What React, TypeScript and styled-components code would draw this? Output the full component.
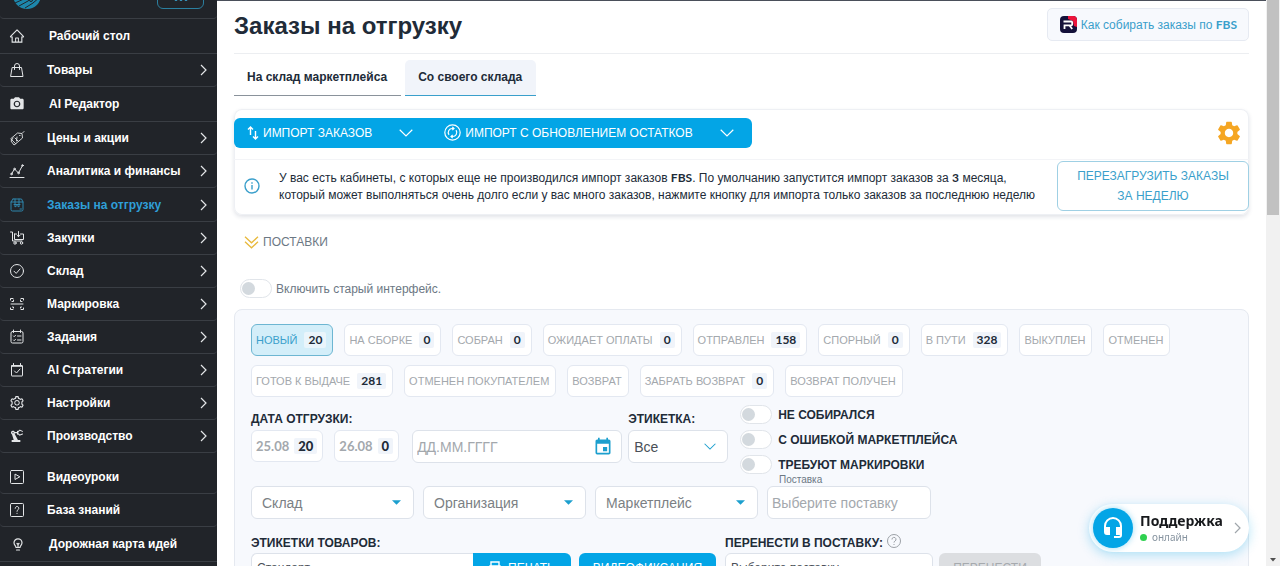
import React from "react";
import styled, { createGlobalStyle, css } from "styled-components";
import { AiOutlineHome, AiOutlineSetting } from "react-icons/ai";
import { MdPrecisionManufacturing, MdSettings, MdEvent, MdLocalSee } from "react-icons/md";

const colors = {
  side: "#212429",
  sideLine: "#3a3e44",
  blue: "#03a5e6",
  link: "#3a9fcb",
  dark: "#212b38",
  grey: "#6c7884",
  mute: "#a3a8ad",
  line: "#dde2ea",
  panel: "#f7f9fd",
};

const GlobalStyle = createGlobalStyle`
  *, *::before, *::after { box-sizing: border-box; }
  body { margin: 0; background: #fff; color: ${colors.dark}; }
  body, button, input, select { font-family: "Liberation Sans", Arial, sans-serif; }
  button, input, select { margin: 0; }
  b { font-family: Lato, sans-serif; }
  svg { display: block; flex: none; }
`;

const Shell = styled.div`
  display: flex;
  height: 100vh;
  overflow: hidden;
`;

/* ---------- sidebar ---------- */

const Sidebar = styled.nav`
  flex: none;
  width: 217px;
  background: ${colors.side};
`;

const Brand = styled.div`
  display: flex;
  justify-content: space-between;
  align-items: flex-end;
  height: 19px;
  padding: 0 13px 9px;
  border-bottom: 1px solid ${colors.sideLine};
  border-radius: 0 0 4px 4px;
`;

const MoreButton = styled.button`
  display: flex;
  justify-content: center;
  align-items: flex-end;
  width: 47px;
  height: 28px;
  padding: 0 0 7px;
  border: 1px solid #2b7f9f;
  border-radius: 6px;
  background: transparent;
`;

const NavList = styled.ul`
  margin: 0;
  padding: 0;
  list-style: none;
`;

const NavItem = styled.li<{ $sub?: boolean; $spaced?: boolean; $active?: boolean }>`
  height: ${(p) => (p.$sub ? (p.$active ? 34 : 33) : 35)}px;
  margin-top: ${(p) => (p.$spaced ? 8 : 0)}px;
  border-bottom: 1px solid ${colors.sideLine};
  border-radius: ${(p) => (p.$sub ? "0 0 4px 4px" : "0")};
`;

const NavLink = styled.a<{ $sub?: boolean; $active?: boolean }>`
  display: flex;
  align-items: center;
  height: 100%;
  padding: 0 8px 0 9px;
  color: ${(p) => (p.$active ? "#2f9fd8" : "#fff")};
  font-size: 12px;
  font-weight: 700;
  text-decoration: none;
  white-space: nowrap;

  span {
    flex: 1;
    padding-left: ${(p) => (p.$sub ? 22 : 24)}px;
  }
  & > svg:first-child {
    color: ${(p) => (p.$active ? "#2f86ad" : "#e4e6e8")};
  }
`;

/* ---------- main column ---------- */

const Main = styled.main`
  flex: 1;
  min-width: 0;
  padding: 7px 17px 0;
  border-top: 1px solid #4a4f5a;
`;

const Header = styled.header`
  display: flex;
  justify-content: space-between;
  align-items: flex-start;
  height: 46px;
  border-bottom: 1px solid #eceef1;
`;

const Title = styled.h1`
  margin: 0;
  font-size: 24px;
  line-height: 36px;
  font-weight: 700;
`;

const HelpLink = styled.a`
  display: flex;
  align-items: center;
  gap: 4px;
  height: 33px;
  padding: 0 11px 0 12px;
  border: 1px solid #e6eaf2;
  border-radius: 5px;
  background: #f7f9fd;
  color: ${colors.link};
  font-size: 12px;
  text-decoration: none;
`;

const Tabs = styled.div`
  display: flex;
  gap: 4px;
  margin-top: 6px;
`;

const Tab = styled.button<{ $active?: boolean }>`
  height: 36px;
  padding: 0 14px 2px 13px;
  border: 0;
  border-bottom: 1px solid ${(p) => (p.$active ? colors.link : "#8a929b")};
  border-radius: ${(p) => (p.$active ? "5px 5px 0 0" : "0")};
  background: ${(p) => (p.$active ? "#f1f4fa" : "transparent")};
  color: ${colors.dark};
  font-size: 12px;
  font-weight: 700;
`;

const ImportCard = styled.section`
  margin-top: 13px;
  border-radius: 8px;
  box-shadow: inset 0 0 0 1px #eef0f4, 0 2px 4px rgba(40, 60, 90, 0.14);
`;

const ImportBar = styled.div`
  display: flex;
  justify-content: space-between;
  align-items: center;
  height: 51px;
  padding: 1px 6px 4px 0;
  border-bottom: 1px solid #f3f4f7;
`;

const SplitButton = styled.div`
  display: flex;
  height: 30px;
  border-radius: 6px;
  background: ${colors.blue};
`;

const BlueAction = styled.button`
  display: flex;
  align-items: center;
  gap: 4px;
  padding: 0 13px;
  border: 0;
  background: transparent;
  color: #fff;
  font-size: 12px;
  white-space: nowrap;
`;

const IconButton = styled.button`
  display: flex;
  align-items: center;
  padding: 0 18px 0 14px;
  border: 0;
  background: transparent;
  color: #fff;
`;

const GearButton = styled(IconButton)`
  padding: 0;
  color: #f5a623;
`;

const Notice = styled.div`
  display: flex;
  align-items: center;
  padding: 1px 0 4px 10px;

  p {
    flex: 1;
    margin: 0;
    padding: 0 16px 0 19px;
    font-size: 12px;
    line-height: 17px;
  }
`;

const OutlineButton = styled.button`
  flex: none;
  width: 192px;
  height: 50px;
  padding: 0 16px;
  border: 1px solid #9fd0e4;
  border-radius: 6px;
  background: #fff;
  color: ${colors.link};
  font-size: 12px;
  line-height: 20px;
`;

const Disclosure = styled.button`
  display: flex;
  align-items: center;
  gap: 4px;
  margin-top: 17px;
  padding: 0 10px;
  height: 20px;
  border: 0;
  background: transparent;
  color: ${colors.grey};
  font-size: 12px;
`;

const SwitchRow = styled.label<{ $bold?: boolean }>`
  display: flex;
  align-items: center;
  gap: ${(p) => (p.$bold ? 6 : 4)}px;
  height: 19px;
  color: ${(p) => (p.$bold ? colors.dark : colors.grey)};
  font-size: 12px;
  font-weight: ${(p) => (p.$bold ? 700 : 400)};
  white-space: nowrap;
`;

const LegacyToggle = styled.div`
  padding: 27px 6px 11px;
`;

const Switch = styled.input`
  appearance: none;
  display: flex;
  align-items: center;
  width: 32px;
  height: 19px;
  padding: 0 1px;
  border: 1px solid #e1e5ea;
  border-radius: 10px;
  background: #fff;

  &::before {
    content: "";
    width: 13px;
    height: 13px;
    border-radius: 50%;
    background: #d3d9de;
  }
`;

const Panel = styled.section`
  padding: 14px 16px;
  border: 1px solid #e5e9f0;
  border-radius: 8px;
  background: ${colors.panel};
`;

const Chips = styled.div`
  display: flex;
  flex-wrap: wrap;
  gap: 9px 11px;
`;

const Chip = styled.button<{ $active?: boolean; $large?: boolean }>`
  display: flex;
  align-items: center;
  gap: ${(p) => (p.$large ? 5 : 7)}px;
  height: 32px;
  padding: 0 ${(p) => (p.$large ? 5 : 6)}px 0 4px;
  border: 1px solid ${(p) => (p.$active ? "#6db6d2" : "#e3e8f1")};
  border-radius: 6px;
  background: ${(p) => (p.$active ? "#d3eef9" : "#fff")};
  color: ${(p) => (p.$active ? colors.link : colors.mute)};
  font-family: ${(p) => (p.$large ? "Lato, sans-serif" : '"Liberation Sans", Arial, sans-serif')};
  font-size: ${(p) => (p.$large ? 13 : 11)}px;
  font-weight: ${(p) => (p.$large ? 700 : 400)};
  white-space: nowrap;

  b {
    padding: 0 4px;
    border-radius: 2px;
    background: ${(p) => (p.$active ? "#eaf5fb" : "#f0f4fa")};
    color: ${colors.dark};
    font-size: ${(p) => (p.$large ? 13 : 12)}px;
    line-height: 16px;
  }
`;

const Row = styled.div<{ $gap?: number; $top?: number }>`
  display: flex;
  align-items: flex-start;
  gap: ${(p) => p.$gap ?? 9}px;
  margin-top: ${(p) => p.$top ?? 0}px;
`;

const Field = styled.div<{ $top?: number }>`
  display: flex;
  flex-direction: column;
  padding-top: ${(p) => p.$top ?? 0}px;
`;

const Label = styled.label`
  display: flex;
  gap: 4px;
  height: 19px;
  font-size: 12px;
  line-height: 19px;
  font-weight: 700;
  white-space: nowrap;
`;

const SwitchStack = styled.div`
  display: flex;
  flex-direction: column;
  gap: 6px;
`;

const control = css`
  width: 100%;
  height: 33px;
  border: 1px solid ${colors.line};
  border-radius: 6px;
  background: #fff;
  font-size: 14px;
  appearance: none;
  outline: 0;
`;

const TextInput = styled.input`
  ${control}
  padding: 0 4px;
  color: ${colors.dark};
  &::placeholder {
    color: ${colors.mute};
    opacity: 1;
  }
`;

const ControlBox = styled.div<{ $w: number; $inset?: number }>`
  position: relative;
  width: ${(p) => p.$w}px;

  svg {
    position: absolute;
    top: 0;
    bottom: 0;
    right: ${(p) => p.$inset ?? 12}px;
    margin: auto 0;
    color: #1c9fce;
    pointer-events: none;
  }
`;

const Select = styled.select<{ $tone?: "soft" | "small"; $joined?: boolean }>`
  ${control}
  padding: 0 ${(p) => (p.$tone === "soft" ? 10 : 5)}px;
  color: ${(p) => (p.$tone === "soft" ? "#7b7f84" : "#4a4f57")};
  ${(p) => p.$tone === "small" && "height: 29px; font-size: 12px;"}
  ${(p) => p.$joined && "border-radius: 6px 0 0 6px; border-right: 0;"}
`;

const TinyLabel = styled.label`
  height: 12px;
  padding-left: 12px;
  color: ${colors.grey};
  font-size: 10px;
  line-height: 12px;
`;

const SolidButton = styled.button<{ $w: number; $kind?: "joined" | "muted" }>`
  display: flex;
  justify-content: center;
  align-items: center;
  gap: 7px;
  width: ${(p) => p.$w}px;
  height: 29px;
  padding: 0;
  border: 0;
  border-radius: ${(p) => (p.$kind === "joined" ? "0 6px 6px 0" : "6px")};
  background: ${(p) => (p.$kind === "muted" ? "#dcdee1" : colors.blue)};
  color: ${(p) => (p.$kind === "muted" ? "#a6aaae" : "#fff")};
  font-size: 12px;
`;

const Support = styled.button`
  position: fixed;
  right: 31px;
  bottom: 14px;
  display: flex;
  align-items: center;
  gap: 7px;
  width: 160px;
  height: 48px;
  padding: 0 8px 0 4px;
  border: 0;
  border-radius: 24px;
  background: #fff;
  box-shadow: 0 3px 12px rgba(3, 165, 230, 0.3);
  color: #a0a6ab;
  text-align: left;
`;

const SupportIcon = styled.span`
  display: grid;
  place-items: center;
  width: 40px;
  height: 40px;
  border-radius: 50%;
  background: ${colors.blue};
  box-shadow: 0 0 6px rgba(3, 165, 230, 0.4);
`;

const SupportText = styled.span`
  flex: 1;
  font-family: "Noto Sans", sans-serif;
  color: #8794a0;
  font-size: 10px;
  line-height: 14px;

  strong {
    display: block;
    color: #17191c;
    font-size: 14px;
    line-height: 18px;
  }
  i {
    display: inline-block;
    width: 7px;
    height: 7px;
    margin-right: 5px;
    border-radius: 50%;
    background: #2fd150;
  }
`;

const Scrollbar = styled.div`
  display: flex;
  flex-direction: column;
  justify-content: space-between;
  align-items: center;
  flex: none;
  width: 14px;
  background: #f1f1f1;

  &::before {
    content: "";
    width: 12px;
    height: 38%;
    background: #c1c1c1;
  }
`;

/* ---------- drawings ---------- */

const Line = ({ size = 16, w = 1, children }: { size?: number; w?: number; children: React.ReactNode }) => (
  <svg width={size} height={size} viewBox="0 0 16 16" fill="none" stroke="currentColor" strokeWidth={w} strokeLinecap="round" strokeLinejoin="round" aria-hidden="true">
    {children}
  </svg>
);

const ChevronRight = () => (
  <svg width="7" height="12" viewBox="0 0 7 12" fill="none" stroke="currentColor" strokeWidth="1.2" aria-hidden="true">
    <path d="M1 1l5 5-5 5" />
  </svg>
);

const ChevronDown = ({ w = 14 }: { w?: number }) => (
  <svg width={w} height={w / 2 + 1} viewBox="0 0 14 8" fill="none" stroke="currentColor" strokeWidth="1.2" aria-hidden="true">
    <path d="M.7 .8L7 7 13.300 .8" />
  </svg>
);

const Caret = () => (
  <svg width="9" height="5" viewBox="0 0 9 5" fill="currentColor" aria-hidden="true">
    <path d="M0 .3h9L4.500 4.800z" />
  </svg>
);

const icons: Record<string, React.ReactNode> = {
  home: <AiOutlineHome size={16} />,
  bag: <Line><path d="M3.500 5.500h9l1.500 9H2zM5.500 7.500V4a2.500 2.500 0 015 0v3.500" /></Line>,
  camera: <MdLocalSee size={16} />,
  tag: <Line w={0.9}><path d="M2 8.500L8.500 3l4.500.5.500 4.500L7 13.500zM13.500 3l1.500-1.500M4 8l-2 3 3 4 2-1.500M6 8l3 3M8 7l-.5 4M10.500 5.500h.6" /></Line>,
  chart: <Line><path d="M1 14.500h14M2.500 11l3-5 4 4L13.500 2.500" /><circle cx="5.500" cy="6" r=".8" /><circle cx="9.500" cy="10" r=".8" /><circle cx="13.500" cy="2.500" r=".8" /><circle cx="2.500" cy="11" r=".8" /></Line>,
  box: <Line><path d="M4 2h8.500L14 5v7.500a1.500 1.500 0 01-1.500 1.500h-9A1.500 1.500 0 012 12.500V5l2-3M2 5h12M6 2v8l2-1.500 2 1.500V2M11 12h1.500M5 7.500h6" /></Line>,
  cart: <Line><path d="M1.500 2h2v9H13M5.500 4v5.500h9V4h-3M5.500 4h2M9.500 1.500v5M8 5.200l1.500 1.500L11 5.200" /><circle cx="6" cy="13" r="1.200" /><circle cx="12.500" cy="13" r="1.200" /></Line>,
  check: <Line><circle cx="8" cy="8" r="6.500" /><path d="M5 8.200l2.200 2.200L11 6" /></Line>,
  scan: <Line><path d="M1.500 4V2.500H4M12 2.500h2.500V4M1.500 12v1.500H4M12 13.500h2.500V12M2 8h12M4.500 4v1.500H3M13 5.500h-1.500V4M4.500 12v-1H3.500M11.500 12v-1h1" /></Line>,
  tasks: <Line><rect x="2" y="2.500" width="12" height="11.500" rx="1.500" /><path d="M4.500 1v2.500M11.500 1v2.500M4.500 7l.7.7L6.500 6.300M8.500 7H12M4.500 11l.7.7 1.300-1.400M8.500 11H12" /></Line>,
  calendar: <Line><rect x="2.500" y="3.500" width="11" height="10.500" rx=".5" /><path d="M4.500 1.500v2M11.500 1.500v2M2.500 4.300h11M5.500 9l2 2 3.500-4" /></Line>,
  gear: <AiOutlineSetting size={16} />,
  robot: <MdPrecisionManufacturing size={16} />,
  play: <Line><rect x="1.500" y="1.500" width="13" height="13" rx="1" /><path d="M6 5.500v5L10.500 8z" /></Line>,
  question: <Line><rect x="1.500" y="1.500" width="13" height="13" rx="1" /><path d="M6.200 6.300a1.800 1.800 0 113 1.300c-.8.600-1.200.9-1.200 1.700M8 11.300v.2" /></Line>,
  bulb: <Line w={1.2}><path d="M7 11.500c0-1.500-2-2.300-2-4.700a4 4 0 018 0c0 2.400-2 3.200-2 4.700zM7.500 14h3M8 7.500l1 1 1-1M9 8.500v3" /></Line>,
};

const menu: { icon: string; text: string; sub?: boolean; leaf?: boolean; spaced?: boolean; active?: boolean }[] = [
  { icon: "home", text: "Рабочий стол" },
  { icon: "bag", text: "Товары", sub: true },
  { icon: "camera", text: "AI Редактор" },
  { icon: "tag", text: "Цены и акции", sub: true },
  { icon: "chart", text: "Аналитика и финансы", sub: true },
  { icon: "box", text: "Заказы на отгрузку", sub: true, active: true },
  { icon: "cart", text: "Закупки", sub: true },
  { icon: "check", text: "Склад", sub: true },
  { icon: "scan", text: "Маркировка", sub: true },
  { icon: "tasks", text: "Задания", sub: true },
  { icon: "calendar", text: "AI Стратегии", sub: true },
  { icon: "gear", text: "Настройки", sub: true },
  { icon: "robot", text: "Производство", sub: true },
  { icon: "play", text: "Видеоуроки", sub: true, leaf: true, spaced: true },
  { icon: "question", text: "База знаний", sub: true, leaf: true },
  { icon: "bulb", text: "Дорожная карта идей" },
];

const statuses: { text: string; count?: number }[] = [
  { text: "НОВЫЙ", count: 20 },
  { text: "НА СБОРКЕ", count: 0 },
  { text: "СОБРАН", count: 0 },
  { text: "ОЖИДАЕТ ОПЛАТЫ", count: 0 },
  { text: "ОТПРАВЛЕН", count: 158 },
  { text: "СПОРНЫЙ", count: 0 },
  { text: "В ПУТИ", count: 328 },
  { text: "ВЫКУПЛЕН" },
  { text: "ОТМЕНЕН" },
  { text: "ГОТОВ К ВЫДАЧЕ", count: 281 },
  { text: "ОТМЕНЕН ПОКУПАТЕЛЕМ" },
  { text: "ВОЗВРАТ" },
  { text: "ЗАБРАТЬ ВОЗВРАТ", count: 0 },
  { text: "ВОЗВРАТ ПОЛУЧЕН" },
];

export default function App() {
  return (
    <>
      <GlobalStyle />
      <Shell>
        <Sidebar>
          <Brand>
            <svg width="28" height="28" viewBox="0 0 28 28" aria-hidden="true">
              <circle cx="14" cy="14" r="14" fill="#1d86ab" />
              <g stroke="#212429" strokeWidth="1" fill="none">
                <path d="M2 22l11-5 8-9M6 25l9-5 10-8M12 27l8-5 7-6" />
                <circle cx="18" cy="19" r="1.500" />
              </g>
            </svg>
            <MoreButton aria-label="Меню">
              <svg width="14" height="3" viewBox="0 0 14 3" fill="#3a9fcb" aria-hidden="true">
                <circle cx="2" cy="1.500" r="1.500" /><circle cx="7" cy="1.500" r="1.500" /><circle cx="12" cy="1.500" r="1.500" />
              </svg>
            </MoreButton>
          </Brand>
          <NavList>
            {menu.map((m) => (
              <NavItem key={m.text} $sub={m.sub} $spaced={m.spaced} $active={m.active}>
                <NavLink href="#" $sub={m.sub} $active={m.active}>
                  {icons[m.icon]}
                  <span>{m.text}</span>
                  {m.sub && !m.leaf && <svg width="9" height="12" viewBox="0 0 9 12" fill="none" stroke="#e4e6e8" strokeWidth="1.200" aria-hidden="true"><path d="M1 1l5 5-5 5" /></svg>}
                </NavLink>
              </NavItem>
            ))}
          </NavList>
        </Sidebar>

        <Main>
          <Header>
            <Title>Заказы на отгрузку</Title>
            <HelpLink href="#">
              <svg width="17" height="17" viewBox="0 0 17 17" aria-hidden="true">
                <rect width="17" height="17" rx="4" fill="#14113a" />
                <path d="M8 0h5a4 4 0 014 4v7l-3-1-1-5-5-2z" fill="#ed143b" />
                <path d="M4.500 13V9.300h6.700a1 1 0 001-1V6.500a1 1 0 00-1-1H3.500M9.500 9.500l2.700 3.500" fill="none" stroke="#fff" strokeWidth="1.800" />
              </svg>
              <span>Как собирать заказы по <b>FBS</b></span>
            </HelpLink>
          </Header>

          <Tabs role="tablist">
            <Tab role="tab">На склад маркетплейса</Tab>
            <Tab role="tab" $active aria-selected="true">Со своего склада</Tab>
          </Tabs>

          <ImportCard>
            <ImportBar>
              <SplitButton>
                <BlueAction>
                  <svg width="12" height="16" viewBox="0 0 12 16" fill="none" stroke="currentColor" strokeWidth="1.400" aria-hidden="true">
                    <path d="M3.500 10V2M1 4.500L3.500 2 6 4.500M8.500 6v8M6 11.500L8.500 14l2.500-2.500" />
                  </svg>
                  ИМПОРТ ЗАКАЗОВ
                </BlueAction>
                <IconButton aria-label="Варианты импорта"><ChevronDown /></IconButton>
                <BlueAction>
                  <svg width="17" height="17" viewBox="0 0 17 17" fill="none" stroke="currentColor" strokeWidth="1.200" aria-hidden="true">
                    <circle cx="8.500" cy="8.500" r="7.700" />
                    <path d="M5 10.800A4 4 0 018.500 4.500h1.200M8.300 2.900L10 4.500 8.300 6.200M12 6.200a4 4 0 01-3.500 6.300H7.300M8.700 14.100L7 12.500l1.700-1.700" />
                  </svg>
                  ИМПОРТ С ОБНОВЛЕНИЕМ ОСТАТКОВ
                </BlueAction>
                <IconButton aria-label="Варианты обновления"><ChevronDown /></IconButton>
              </SplitButton>
              <GearButton aria-label="Настройки импорта"><MdSettings size={28} /></GearButton>
            </ImportBar>
            <Notice>
              <svg width="16" height="16" viewBox="0 0 16 16" fill="none" stroke="#3a9fcb" strokeWidth="1.400" aria-hidden="true">
                <circle cx="8" cy="8" r="7" /><path d="M8 7v4.500M8 4.300v1.400" />
              </svg>
              <p>
                У вас есть кабинеты, с которых еще не производился импорт заказов <b>FBS</b>. По умолчанию запустится импорт заказов за <b>3</b> месяца, который может выполняться очень долго если у вас много заказов, нажмите кнопку для импорта только заказов за последнюю неделю
              </p>
              <OutlineButton>ПЕРЕЗАГРУЗИТЬ ЗАКАЗЫ ЗА НЕДЕЛЮ</OutlineButton>
            </Notice>
          </ImportCard>

          <Disclosure>
            <svg width="15" height="13" viewBox="0 0 15 13" fill="none" stroke="#e8b93c" strokeWidth="1.300" aria-hidden="true">
              <path d="M1 .8l6.500 6 6.500-6M1 5.800l6.500 6 6.500-6" />
            </svg>
            ПОСТАВКИ
          </Disclosure>

          <LegacyToggle>
            <SwitchRow><Switch type="checkbox" role="switch" />Включить старый интерфейс.</SwitchRow>
          </LegacyToggle>

          <Panel>
            <Chips>
              {statuses.map((s, i) => (
                <Chip key={s.text} $active={i === 0}>
                  {s.text}
                  {s.count !== undefined && <b>{s.count}</b>}
                </Chip>
              ))}
            </Chips>

            <Row $gap={12} $top={8}>
              <Row $gap={6}>
                <Row $gap={13}>
                  <Field $top={5}>
                    <Label as="div">ДАТА ОТГРУЗКИ:</Label>
                    <Row $gap={11} $top={1}>
                      <Chip $large>25.08<b>20</b></Chip>
                      <Chip $large>26.08<b>0</b></Chip>
                    </Row>
                  </Field>
                  <Row $top={25}>
                    <ControlBox $w={210} $inset={9}>
                      <TextInput placeholder="ДД.ММ.ГГГГ" aria-label="Дата отгрузки" />
                      <MdEvent size={20} />
                    </ControlBox>
                  </Row>
                </Row>
                <Field $top={5}>
                  <Label htmlFor="sticker">ЭТИКЕТКА:</Label>
                  <Row $top={1}>
                    <ControlBox $w={100}>
                      <Select id="sticker"><option>Все</option></Select>
                      <ChevronDown w={12} />
                    </ControlBox>
                  </Row>
                </Field>
              </Row>
              <SwitchStack>
                {["НЕ СОБИРАЛСЯ", "С ОШИБКОЙ МАРКЕТПЛЕЙСА", "ТРЕБУЮТ МАРКИРОВКИ"].map((t) => (
                  <SwitchRow key={t} $bold><Switch type="checkbox" role="switch" />{t}</SwitchRow>
                ))}
              </SwitchStack>
            </Row>

            <Row>
              {["Склад", "Организация", "Маркетплейс"].map((t) => (
                <Row key={t} $top={12}>
                  <ControlBox $w={163} $inset={13}>
                    <Select $tone="soft" aria-label={t}><option>{t}</option></Select>
                    <Caret />
                  </ControlBox>
                </Row>
              ))}
              <Field>
                <TinyLabel htmlFor="supply">Поставка</TinyLabel>
                <ControlBox $w={164}>
                  <TextInput id="supply" placeholder="Выберите поставку" />
                </ControlBox>
              </Field>
            </Row>

            <Row $top={15}>
              <Field>
                <Label htmlFor="product-sticker">ЭТИКЕТКИ ТОВАРОВ:</Label>
                <Row $gap={8}>
                  <Row $gap={0}>
                    <ControlBox $w={222}>
                      <Select id="product-sticker" $tone="small" $joined><option>Стандарт</option></Select>
                    </ControlBox>
                    <SolidButton $w={98} $kind="joined">
                      <svg width="12" height="14" viewBox="0 0 12 14" fill="none" stroke="currentColor" strokeWidth="1.400" aria-hidden="true">
                        <path d="M2 5V1h8v4M2 11H1V5h10v6h-1M3 8.500h6V13H3z" />
                      </svg>
                      ПЕЧАТЬ
                    </SolidButton>
                  </Row>
                  <SolidButton $w={137}>ВИДЕОФИКСАЦИЯ</SolidButton>
                </Row>
              </Field>
              <Field>
                <Label htmlFor="move-supply">
                  ПЕРЕНЕСТИ В ПОСТАВКУ:
                  <svg width="14" height="14" viewBox="0 0 14 14" fill="none" stroke="#9ba0a6" aria-hidden="true">
                    <circle cx="7" cy="7" r="6.500" /><path d="M5 5.500a2 2 0 113 1.600c-.8.500-1 .8-1 1.500M7 10v1" />
                  </svg>
                </Label>
                <Row $gap={6}>
                  <ControlBox $w={208}>
                    <Select id="move-supply" $tone="small"><option>Выберите поставку</option></Select>
                  </ControlBox>
                  <SolidButton $w={102} $kind="muted">ПЕРЕНЕСТИ</SolidButton>
                </Row>
              </Field>
            </Row>
          </Panel>
        </Main>

        <Scrollbar>
          <svg width="8" height="12" viewBox="0 0 8 12" fill="#505050" aria-hidden="true"><path d="M1 4h6L4 7.500z" /></svg>
        </Scrollbar>
      </Shell>

      <Support>
        <SupportIcon>
          <svg width="20" height="22" viewBox="0 0 20 22" fill="none" stroke="#fff" strokeWidth="2" aria-hidden="true">
            <path d="M2 12V9a8 8 0 0116 0v9a2 2 0 01-2 2h-5" />
            <path d="M2 11h4v6H4a2 2 0 01-2-2zM18 11h-4v6h4z" fill="#fff" />
          </svg>
        </SupportIcon>
        <SupportText><strong>Поддержка</strong><i />онлайн</SupportText>
        <ChevronRight />
      </Support>
    </>
  );
}
